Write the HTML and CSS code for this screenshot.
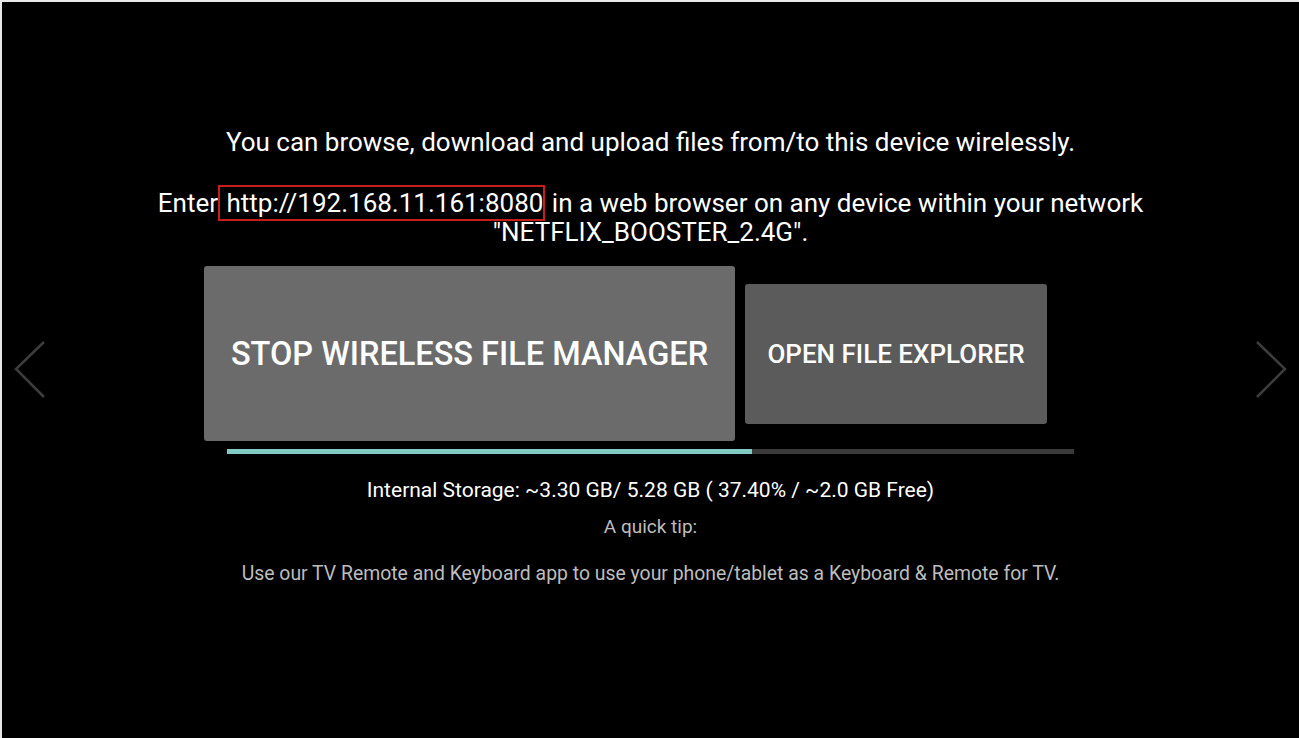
FILE: index.html
```html
<!DOCTYPE html>
<html lang="en">
<head>
<meta charset="UTF-8">
<meta name="viewport" content="width=device-width, initial-scale=1.0">
<title>Wireless File Manager</title>
<link rel="stylesheet" href="styles.css">
</head>
<body>

<div class="screen">
    <div class="nav">
        <svg width="32" height="60" viewBox="0 0 32 60"><polyline points="30,2 2,29 30,57" fill="none" stroke="#3d3d3d" stroke-width="2.5"/></svg>
    </div>

    <div class="content">
        <p class="intro">You can browse, download and upload files from/to this device wirelessly.</p>
        <p class="address">Enter<span class="url"> http://192.168.11.161:8080</span> in a web browser on any device within your network<br>"NETFLIX_BOOSTER_2.4G".</p>

        <div class="actions">
            <button class="btn btn-main">STOP WIRELESS FILE MANAGER</button>
            <button class="btn btn-side">OPEN FILE EXPLORER</button>
        </div>

        <div class="storage-bar">
            <div class="storage-fill" style="width: 62%"></div>
        </div>

        <p class="storage">Internal Storage: ~3.30 GB/ 5.28 GB ( 37.40% / ~2.0 GB Free)</p>
        <p class="tip-title">A quick tip:</p>
        <p class="tip">Use our TV Remote and Keyboard app to use your phone/tablet as a Keyboard &amp; Remote for TV.</p>
    </div>

    <div class="nav">
        <svg width="32" height="60" viewBox="0 0 32 60"><polyline points="2,2 30,29 2,57" fill="none" stroke="#3d3d3d" stroke-width="2.5"/></svg>
    </div>
</div>

</body>
</html>
```

FILE: styles.css
```css
body {
    margin: 0;
    padding: 0;
    background-color: #000;
    font-family: Roboto, "Liberation Sans", sans-serif;
    color: #fff;
}
.screen {
    display: flex;
    align-items: center;
    height: 738px;
    border-top: 2px solid #e8e8e8;
    border-left: 2px solid #e8e8e8;
    box-sizing: border-box;
}
.nav {
    width: 56px;
    display: flex;
    justify-content: center;
}
.content {
    flex: 1;
    align-self: flex-start;
    padding-top: 126px;
    text-align: center;
}
p {
    margin: 0;
}
.intro {
    font-size: 26px;
    line-height: 29px;
}
.address {
    font-size: 26px;
    line-height: 29px;
    margin-top: 32px;
}
.url {
    border: 2px solid #c61d1d;
    padding: 1px 0;
}
.actions {
    display: flex;
    align-items: center;
    justify-content: center;
    gap: 10px;
    padding-right: 50px;
    margin-top: 19px;
}
.btn {
    border: none;
    border-radius: 3px;
    color: #fff;
    font-family: Roboto, "Liberation Sans", sans-serif;
    font-weight: 500;
    padding: 0;
}
.btn-main {
    width: 531px;
    height: 175px;
    background-color: #6b6b6c;
    font-size: 32.5px;
}
.btn-side {
    width: 302px;
    height: 140px;
    background-color: #5b5b5c;
    font-size: 26px;
}
.storage-bar {
    width: 847px;
    height: 5px;
    margin: 8px auto 0;
    background-color: #3a3a3a;
}
.storage-fill {
    height: 100%;
    background-color: #80cbc4;
}
.storage {
    font-size: 21px;
    line-height: 24px;
    margin-top: 24px;
}
.tip-title {
    font-size: 19px;
    line-height: 22px;
    margin-top: 14px;
    color: #bdbdbd;
}
.tip {
    font-size: 19.4px;
    line-height: 22px;
    margin-top: 25px;
    color: #bdbdbd;
}
```
